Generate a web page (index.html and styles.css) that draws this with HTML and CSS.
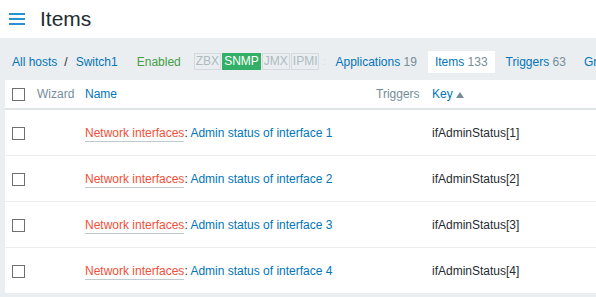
FILE: index.html
```html
<!DOCTYPE html>
<html lang="en">
<head>
<meta charset="UTF-8" />
<title>Items</title>
<link rel="stylesheet" href="styles.css">
</head>
<body>

<header class="page-header">
    <span class="menu-icon">
        <svg width="16" height="12" viewBox="0 0 16 12">
            <rect x="0" y="0" width="16" height="2" fill="#2b8fd0"/>
            <rect x="0" y="5" width="16" height="2" fill="#2b8fd0"/>
            <rect x="0" y="10" width="16" height="2" fill="#2b8fd0"/>
        </svg>
    </span>
    <h1>Items</h1>
</header>

<div class="wrapper">
    <!-- Навигация по хосту -->
    <nav class="host-nav">
        <a href="#" class="link">All hosts</a>
        <span class="slash">/</span>
        <a href="#" class="link">Switch1</a>
        <span class="status-enabled">Enabled</span>
        <span class="avail">
            <span class="avail-box">ZBX</span><span class="avail-box on">SNMP</span><span class="avail-box">JMX</span><span class="avail-box">IPMI</span>
        </span>
        <span class="sep">:</span>
        <a href="#" class="tab"><span class="link">Applications</span> <sup>19</sup></a>
        <a href="#" class="tab active"><span class="link">Items</span> <sup>133</sup></a>
        <a href="#" class="tab"><span class="link">Triggers</span> <sup>63</sup></a>
        <a href="#" class="tab"><span class="link">Graphs</span> <sup>4</sup></a>
    </nav>

    <div class="panel">
        <table class="list">
            <colgroup>
                <col class="c-check">
                <col class="c-wizard">
                <col class="c-name">
                <col class="c-triggers">
                <col>
            </colgroup>
            <thead>
                <tr>
                    <th><span class="checkbox"></span></th>
                    <th class="muted">Wizard</th>
                    <th><a href="#" class="link">Name</a></th>
                    <th class="muted">Triggers</th>
                    <th><a href="#" class="link">Key</a><span class="arrow-up"></span></th>
                </tr>
            </thead>
            <tbody id="items-body">
                <tr>
                    <td><span class="checkbox"></span></td>
                    <td></td>
                    <td><a href="#" class="app">Network interfaces</a>: <a href="#" class="link">Admin status of interface 1</a></td>
                    <td></td>
                    <td>ifAdminStatus[1]</td>
                </tr>
                <tr>
                    <td><span class="checkbox"></span></td>
                    <td></td>
                    <td><a href="#" class="app">Network interfaces</a>: <a href="#" class="link">Admin status of interface 2</a></td>
                    <td></td>
                    <td>ifAdminStatus[2]</td>
                </tr>
                <tr>
                    <td><span class="checkbox"></span></td>
                    <td></td>
                    <td><a href="#" class="app">Network interfaces</a>: <a href="#" class="link">Admin status of interface 3</a></td>
                    <td></td>
                    <td>ifAdminStatus[3]</td>
                </tr>
                <tr>
                    <td><span class="checkbox"></span></td>
                    <td></td>
                    <td><a href="#" class="app">Network interfaces</a>: <a href="#" class="link">Admin status of interface 4</a></td>
                    <td></td>
                    <td>ifAdminStatus[4]</td>
                </tr>
            </tbody>
        </table>
    </div>
</div>

</body>
</html>
```

FILE: styles.css
```css
body {
    font-family: "Liberation Sans", Arial, sans-serif;
    font-size: 12px;
    color: #1f2c33;
    background: #ebeef0;
    margin: 0; padding: 0;
    overflow: hidden;
}
a {
    text-decoration: none;
}
.link {
    color: #0275b8;
}
/* Заголовок */
.page-header {
    display: flex;
    align-items: center;
    height: 38px;
    background: #fff;
    padding-left: 9px;
}
.menu-icon {
    display: flex;
    width: 16px;
    margin-top: -1px;
}
.page-header h1 {
    margin: 0 0 0 15px;
    font-size: 21px;
    font-weight: normal;
    color: #1f2c33;
}
/* Навигация */
.wrapper {
    padding: 0 0 0 5px;
}
.host-nav {
    display: flex;
    align-items: center;
    box-sizing: border-box;
    height: 42px;
    padding: 5px 0 0 7px;
    white-space: nowrap;
}
.host-nav > * {
    flex-shrink: 0;
}
.slash {
    margin: 0 8px 0 7px;
    color: #1f2c33;
}
.status-enabled {
    color: #429e47;
    margin-left: 19px;
}
.avail {
    display: flex;
    margin-left: 13px;
}
.avail-box {
    border: 1px solid #d4dbdf;
    color: #acbbc2;
    padding: 0 1px;
    line-height: 15px;
    margin-right: 1px;
}
.avail-box.on {
    background: #34af67;
    border-color: #34af67;
    color: #fff;
}
.sep {
    width: 8px;
    text-align: center;
    color: #cdd6db;
    font-size: 10px;
}
.tab {
    padding: 0 7px;
    line-height: 22px;
    margin-right: 4px;
}
.tab.active {
    background: #fff;
}
.tab sup {
    vertical-align: baseline;
    font-size: 12px;
    color: #768d99;
}
/* Таблица */
.panel {
    background: #fff;
    width: 700px;
}
table.list {
    width: 100%;
    border-collapse: collapse;
    table-layout: fixed;
}
.c-check { width: 26px; }
.c-wizard { width: 48px; }
.c-name { width: 291px; }
.c-triggers { width: 56px; }
table.list th {
    text-align: left;
    font-weight: normal;
    height: 28px;
    padding: 0 6px;
    border-bottom: 2px solid #dfe4e7;
    vertical-align: middle;
}
table.list th:first-child,
table.list td:first-child {
    padding: 0 0 0 7px;
}
table.list th.muted {
    color: #768d99;
}
table.list td {
    height: 45px;
    padding: 0 6px;
    border-bottom: 1px solid #ebeef0;
    vertical-align: middle;
    white-space: nowrap;
}
.checkbox {
    display: block;
    width: 11px;
    height: 11px;
    border: 1px solid #6f6f6f;
    margin-top: 1px;
}
.arrow-up {
    display: inline-block;
    width: 0; height: 0;
    border-left: 4px solid transparent;
    border-right: 4px solid transparent;
    border-bottom: 6px solid #768d99;
    margin-left: 3px;
}
a.app {
    color: #f24f38;
    border-bottom: 1px solid #bfc9ce;
    padding-bottom: 1px;
}
```
